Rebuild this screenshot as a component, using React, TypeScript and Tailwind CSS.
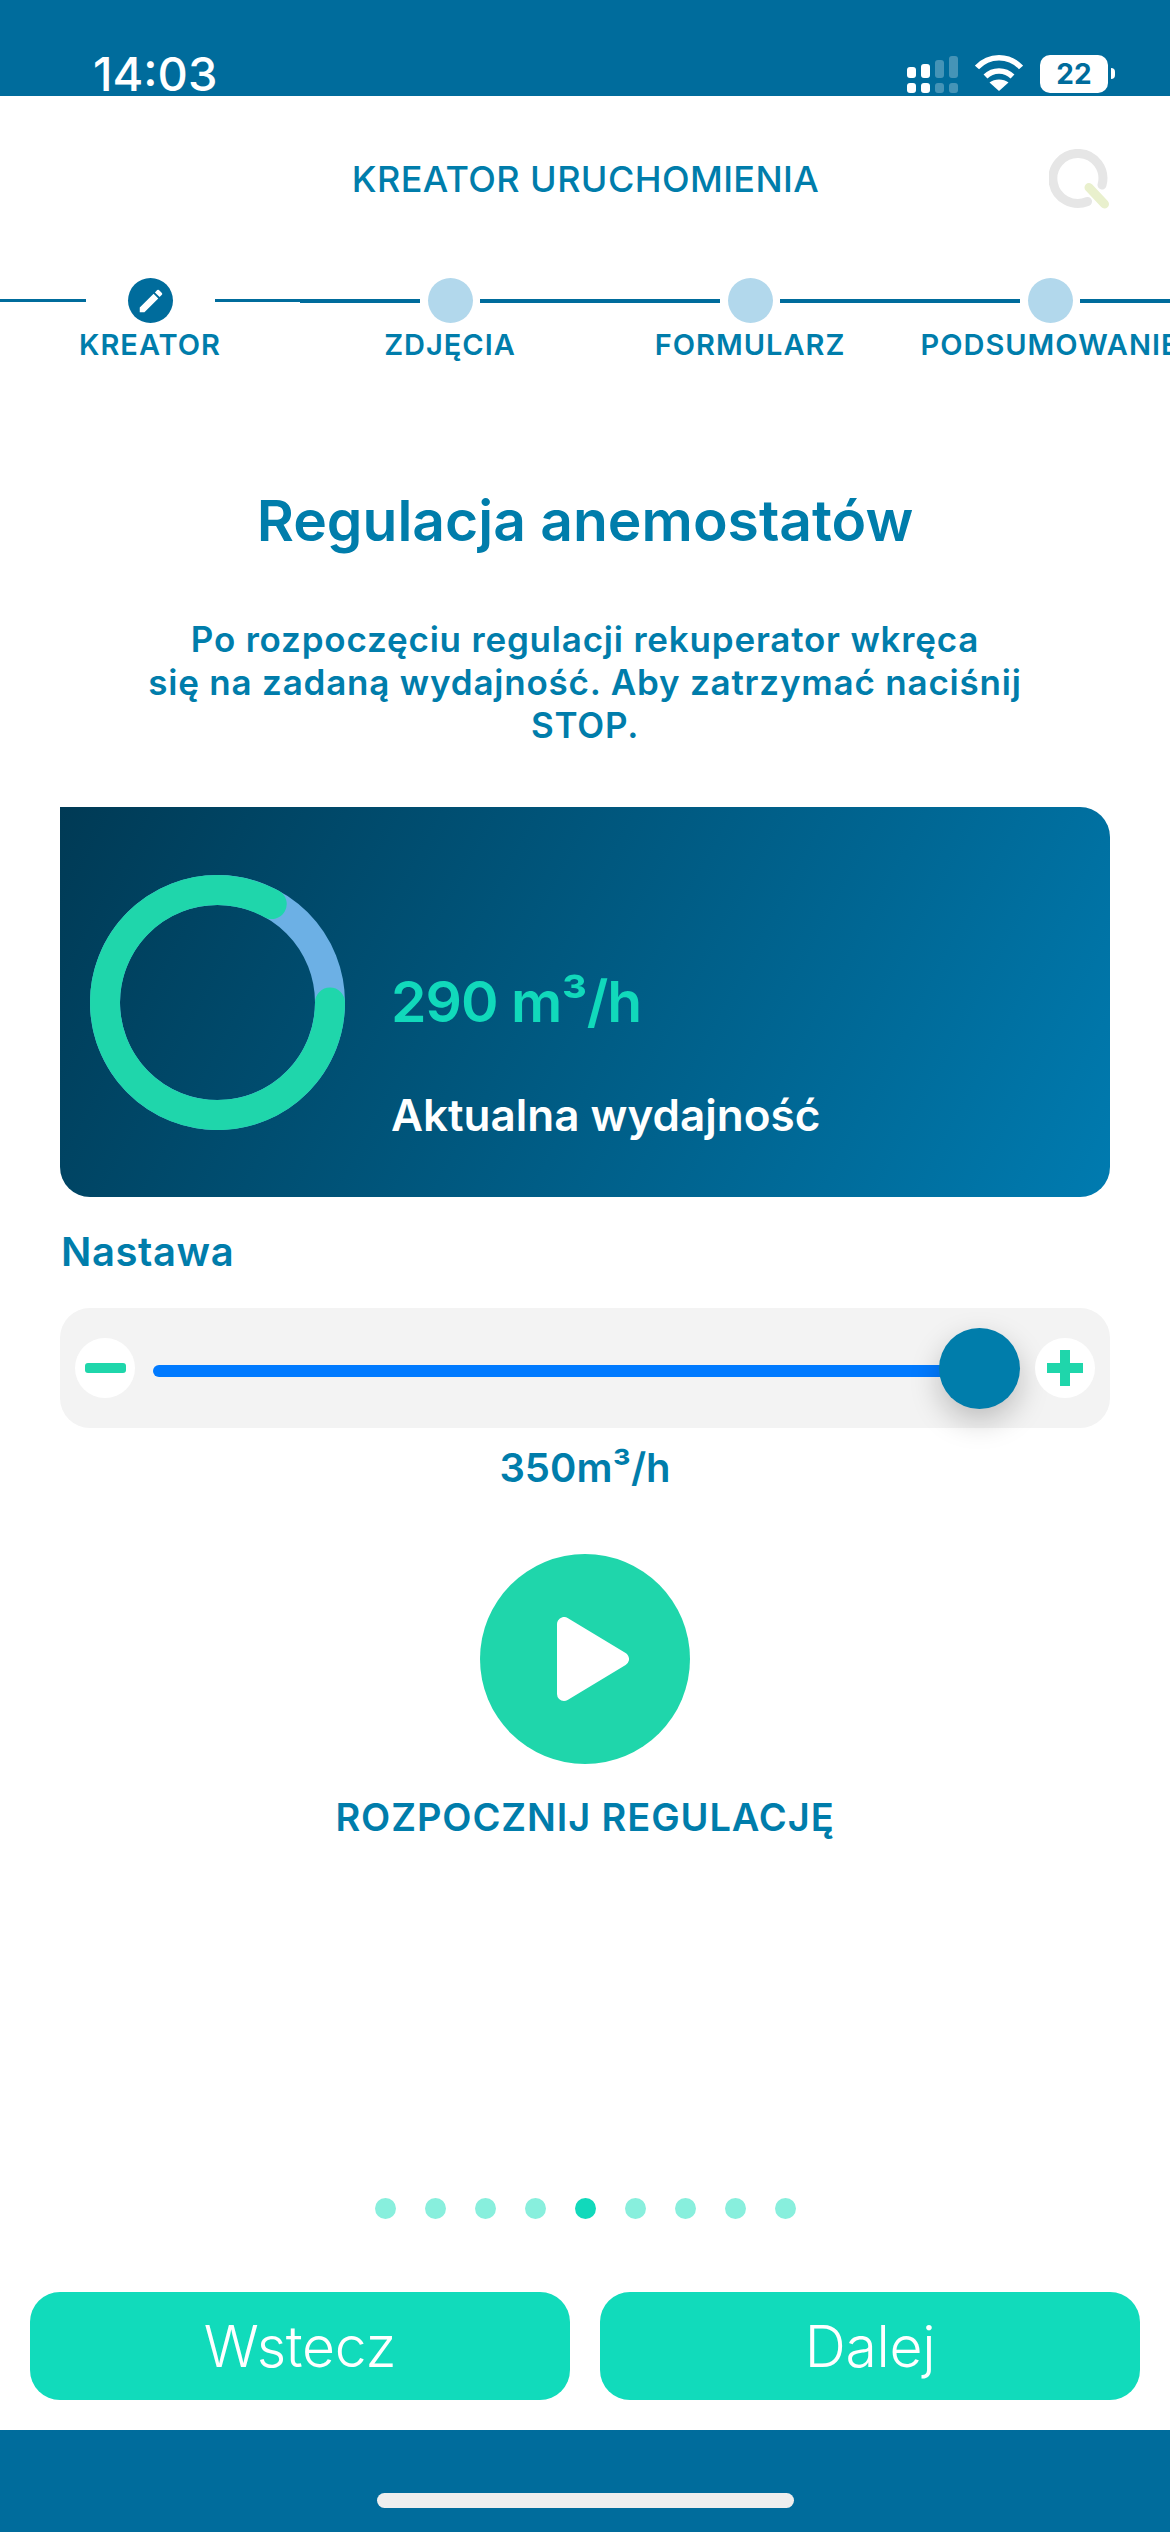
import React from 'react';
import { MdEdit } from 'react-icons/md';

const steps = ['KREATOR', 'ZDJĘCIA', 'FORMULARZ', 'PODSUMOWANIE'];
const dots = [0, 1, 2, 3, 4, 5, 6, 7, 8];

const SignalIcon = () => (
    <svg width="51" height="37" viewBox="0 0 51 37" className="block">
        <g fill="#fff">
            <rect x="0" y="11" width="9" height="11" rx="3" />
            <rect x="14" y="8" width="9" height="14" rx="3" />
            <rect x="0" y="27" width="9" height="10" rx="3" />
            <rect x="14" y="27" width="9" height="10" rx="3" />
        </g>
        <g fill="#fff" opacity="0.27">
            <rect x="28" y="4" width="9" height="18" rx="3" />
            <rect x="42" y="0" width="9" height="22" rx="3" />
            <rect x="28" y="27" width="9" height="10" rx="3" />
            <rect x="42" y="27" width="9" height="10" rx="3" />
        </g>
    </svg>
);

const WifiIcon = () => (
    <svg width="48" height="36" viewBox="0 0 48 36" className="block" fill="none">
        <path d="M2 12.5C14 -0.5 34 -0.5 46 12.5" stroke="#fff" strokeWidth="5.5" />
        <path d="M10.5 21.5C18 14 30 14 37.5 21.5" stroke="#fff" strokeWidth="5.5" />
        <path d="M24 36L14.5 27.5C19.5 23.5 28.5 23.5 33.5 27.5L24 36Z" fill="#fff" />
    </svg>
);

const Logo = () => (
    <svg width="60" height="60" viewBox="0 0 60 60" className="block" fill="none">
        <path d="M38.5 52.5A25 25 0 1 1 53 36" stroke="#e6e6e6" strokeWidth="9" strokeLinecap="round" />
        <path d="M40 38.5L55.5 55" stroke="#e9f0cd" strokeWidth="9" strokeLinecap="round" />
    </svg>
);

const Ring = () => (
    <svg width="255" height="255" viewBox="0 0 255 255" className="block shrink-0" fill="none">
        <circle cx="127.5" cy="127.5" r="112.5" stroke="#6cb0e5" strokeWidth="30" />
        <path
            d="M240 127.5A112.5 112.5 0 1 1 181.7 29"
            stroke="#1fd6ab"
            strokeWidth="30"
            strokeLinecap="round"
        />
    </svg>
);

const Step = ({ label, active }: { label: string; active: boolean }) => (
    <div className="w-[300px] shrink-0 flex flex-col items-center">
        <div className="w-full flex items-center justify-between">
            <div className={active ? 'h-[3px] w-[86px] bg-[#006c9c]' : 'h-[4px] w-[120px] bg-[#006c9c]'} />
            {active ? (
                <div className="w-[45px] h-[45px] rounded-full bg-[#006c9c] flex items-center justify-center text-white">
                    <MdEdit size={30} />
                </div>
            ) : (
                <div className="w-[45px] h-[45px] rounded-full bg-[#b2d8ec]" />
            )}
            <div className={active ? 'h-[3px] w-[85px] bg-[#006c9c]' : 'h-[4px] w-[120px] bg-[#006c9c]'} />
        </div>
        <span className="mt-[5px] text-[29px] leading-[34px] font-semibold tracking-[1px] text-[#007dab] whitespace-nowrap">
            {label}
        </span>
    </div>
);

export default function App() {
    return (
        <div className="w-[1170px] h-[2532px] overflow-hidden bg-white flex flex-col font-['Inter',sans-serif] text-[#007dab]">
            {/* status bar */}
            <div className="h-[96px] shrink-0 bg-[#006c9c] flex items-start justify-between text-white">
                <span className="ml-[93px] mt-[46px] text-[47px] leading-[56px] font-medium">14:03</span>
                <div className="flex items-start mr-[55px] mt-[55px]">
                    <div className="mt-[1px]"><SignalIcon /></div>
                    <div className="ml-[17px]"><WifiIcon /></div>
                    <div className="ml-[17px] w-[68px] h-[38px] rounded-[10px] bg-white flex items-center justify-center text-[#006c9c] text-[28px] leading-none font-bold">
                        22
                    </div>
                    <div className="ml-[3px] mt-[13px] w-[4px] h-[11px] rounded-r-full bg-white" />
                </div>
            </div>

            {/* header */}
            <div className="pt-[53px] pl-[62px] pr-[61px] flex items-center justify-between">
                <div className="w-[60px]" />
                <h1 className="text-[36px] leading-[44px] font-medium tracking-[0.4px]">KREATOR URUCHOMIENIA</h1>
                <Logo />
            </div>

            {/* stepper */}
            <div className="mt-[69px] flex">
                {steps.map((s, i) => (
                    <Step key={s} label={s} active={i === 0} />
                ))}
            </div>

            <h2 className="mt-[125px] text-center text-[57px] leading-[68px] font-semibold">Regulacja anemostatów</h2>

            <p className="mt-[63px] text-center text-[35px] leading-[43px] font-semibold tracking-[0.8px]">
                Po rozpoczęciu regulacji rekuperator wkręca
                <br />
                się na zadaną wydajność. Aby zatrzymać naciśnij
                <br />
                STOP.
            </p>

            {/* current flow card */}
            <div className="mt-[60px] mx-[60px] h-[390px] shrink-0 rounded-[30px] rounded-tl-none bg-[linear-gradient(118deg,#003a55,#007bb0)] pl-[30px] pt-[68px] flex items-start">
                <Ring />
                <div className="ml-[46px] mt-[91px] flex flex-col">
                    <span className="text-[57px] leading-[72px] font-semibold tracking-[-1px] text-[#11d9bb]">290 m³/h</span>
                    <span className="mt-[51px] text-[44px] leading-[52px] font-semibold text-white">Aktualna wydajność</span>
                </div>
            </div>

            <div className="mt-[31px] mx-[61px] text-[40px] leading-[48px] font-semibold tracking-[0.6px]">Nastawa</div>

            {/* setpoint slider */}
            <div className="mt-[32px] mx-[60px] h-[120px] shrink-0 rounded-[30px] bg-[#f3f3f3] pl-[15px] pr-[15px] flex items-center">
                <div className="w-[60px] h-[60px] shrink-0 rounded-full bg-white flex items-center justify-center">
                    <div className="w-[41px] h-[10px] rounded-[3px] bg-[#1fd6ab]" />
                </div>
                <div className="ml-[18px] flex-1 h-[12px] mt-[6px] rounded-l-full bg-[#007aff]" />
                <div className="-ml-[6px] w-[81px] h-[81px] shrink-0 rounded-full bg-[#007dab] shadow-[0_12px_30px_rgba(0,0,0,0.22)]" />
                <div className="ml-[15px] w-[60px] h-[60px] shrink-0 rounded-full bg-white flex items-center justify-center">
                    <svg width="36" height="36" viewBox="0 0 36 36" fill="#1fd6ab" className="block">
                        <rect x="13" y="0" width="10" height="36" />
                        <rect x="0" y="13" width="36" height="10" />
                    </svg>
                </div>
            </div>

            <div className="mt-[16px] text-center text-[40px] leading-[48px] font-semibold">350m³/h</div>

            {/* start */}
            <div className="mt-[62px] self-center w-[210px] h-[210px] shrink-0 rounded-full bg-[#1fd6ab] flex items-center justify-center">
                <svg width="72" height="84" viewBox="0 0 72 84" fill="#fff" stroke="#fff" strokeWidth="14" strokeLinejoin="round" className="block ml-[15px]">
                    <path d="M7 7V77L65 42Z" />
                </svg>
            </div>
            <div className="mt-[30px] text-center text-[38px] leading-[46px] font-semibold tracking-[0.9px]">ROZPOCZNIJ REGULACJĘ</div>

            {/* pager */}
            <div className="mt-[358px] flex justify-center gap-[29px]">
                {dots.map((d) => (
                    <div key={d} className={d === 4 ? 'w-[21px] h-[21px] rounded-full bg-[#11d9bb]' : 'w-[21px] h-[21px] rounded-full bg-[#88efdd]'} />
                ))}
            </div>

            <div className="mt-[73px] px-[30px] flex gap-[30px]">
                <button className="flex-1 h-[108px] rounded-[30px] bg-[#11dbbb] text-white text-[57px] leading-none font-[350] tracking-[-0.3px]">Wstecz</button>
                <button className="flex-1 h-[108px] rounded-[30px] bg-[#11dbbb] text-white text-[57px] leading-none font-[350] tracking-[-0.3px]">Dalej</button>
            </div>

            {/* bottom bar */}
            <div className="mt-[30px] flex-1 bg-[#006c9c] pt-[63px] flex justify-center">
                <div className="w-[417px] h-[15px] rounded-full bg-[#eeeeee]" />
            </div>
        </div>
    );
}
